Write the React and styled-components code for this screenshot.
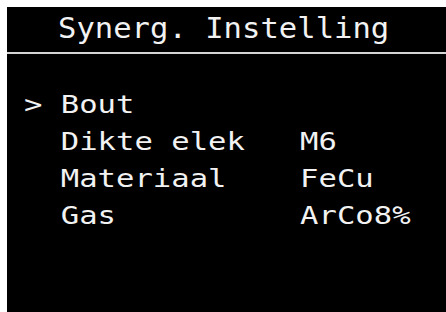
import styled, { createGlobalStyle } from "styled-components";

const GlobalStyle = createGlobalStyle`
  html, body {
    margin: 0;
    padding: 0;
    background: #ffffff;
    width: 446px;
    height: 312px;
    overflow: hidden;
  }
`;

const Page = styled.div`
  padding: 7px 0 0 7px;
  height: 312px;
  box-sizing: border-box;
`;

const Screen = styled.div`
  background: #000;
  height: 100%;
  color: #f2f2f2;
  font-family: "DejaVu Sans Mono", "Liberation Mono", monospace;
`;

const Header = styled.div`
  height: 47px;
  box-sizing: border-box;
  padding-left: 51px;
  border-bottom: 2px solid #d4d4d4;
`;

const Title = styled.div`
  width: max-content;
  font-size: 29px;
  line-height: 42px;
  white-space: pre;
  transform: scaleX(1.054);
  transform-origin: left center;
`;

const Menu = styled.div`
  padding: 32px 0 0 17px;
  display: flex;
  flex-direction: column;
  align-items: flex-start;
`;

/* the LCD font is wider than DejaVu Mono, so stretch each row */
const Row = styled.div`
  display: grid;
  width: max-content;
  grid-template-columns: 2ch 13ch 6ch;
  font-size: 25px;
  line-height: 37px;
  white-space: pre;
  transform: scaleX(1.223);
  transform-origin: left center;
`;

const Cursor = styled.span`
  visibility: ${(p) => (p.$active ? "visible" : "hidden")};
`;

const Label = styled.span``;
const Value = styled.span``;

const items = [
  { label: "Bout", value: "", active: true },
  { label: "Dikte elek", value: "M6" },
  { label: "Materiaal", value: "FeCu" },
  { label: "Gas", value: "ArCo8%" },
];

const App = () => {
  return (
    <>
      <GlobalStyle />
      <Page>
        <Screen>
          <Header>
            <Title>Synerg. Instelling</Title>
          </Header>
          <Menu>
            {items.map((item) => (
              <Row key={item.label}>
                <Cursor $active={item.active}>&gt;</Cursor>
                <Label>{item.label}</Label>
                <Value>{item.value}</Value>
              </Row>
            ))}
          </Menu>
        </Screen>
      </Page>
    </>
  );
};

export default App;
